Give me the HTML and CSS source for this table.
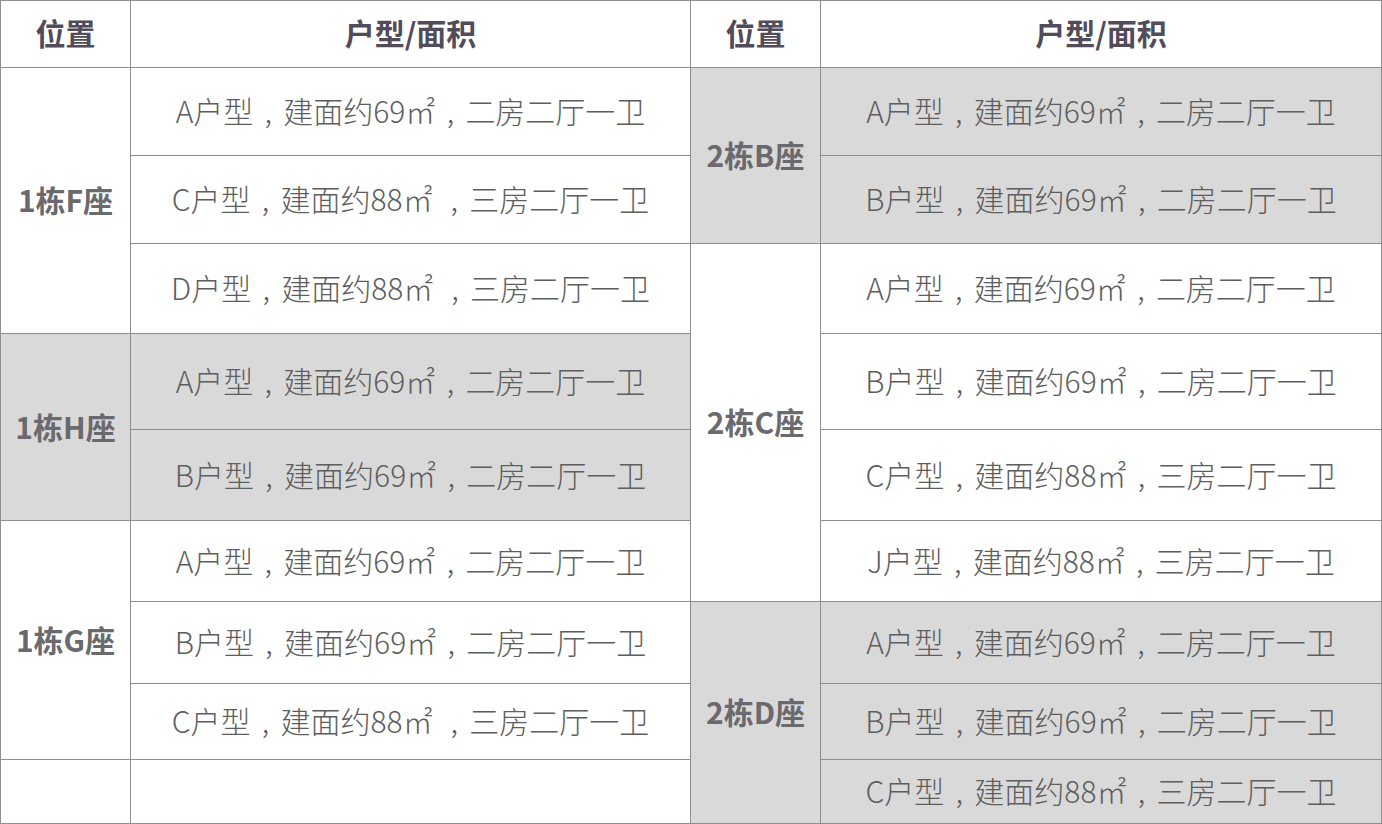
FILE: index.html
```html
<!DOCTYPE html>
<html lang="zh-CN">
<head>
<meta charset="utf-8">
<title>户型表</title>
<link rel="stylesheet" href="styles.css">
</head>
<body>
<div class="table">
  <div class="cell head c1 r1">位置</div>
  <div class="cell head c2 r1">户型/面积</div>
  <div class="cell head c3 r1">位置</div>
  <div class="cell head c4 r1">户型/面积</div>

  <div class="cell name c1 r2 span3">1栋F座</div>
  <div class="cell c2 r2">A户型<span class="cm">,</span>建面约69㎡<span class="cm">,</span>二房二厅一卫</div>
  <div class="cell c2 r3">C户型<span class="cm">,</span>建面约88㎡ <span class="cm">,</span>三房二厅一卫</div>
  <div class="cell c2 r4">D户型<span class="cm">,</span>建面约88㎡ <span class="cm">,</span>三房二厅一卫</div>

  <div class="cell name gray c1 r5 span2">1栋H座</div>
  <div class="cell gray c2 r5">A户型<span class="cm">,</span>建面约69㎡<span class="cm">,</span>二房二厅一卫</div>
  <div class="cell gray c2 r6">B户型<span class="cm">,</span>建面约69㎡<span class="cm">,</span>二房二厅一卫</div>

  <div class="cell name c1 r7 span3">1栋G座</div>
  <div class="cell c2 r7">A户型<span class="cm">,</span>建面约69㎡<span class="cm">,</span>二房二厅一卫</div>
  <div class="cell c2 r8">B户型<span class="cm">,</span>建面约69㎡<span class="cm">,</span>二房二厅一卫</div>
  <div class="cell c2 r9">C户型<span class="cm">,</span>建面约88㎡ <span class="cm">,</span>三房二厅一卫</div>

  <div class="cell c1 r10"></div>
  <div class="cell c2 r10"></div>

  <div class="cell name gray c3 r2 span2">2栋B座</div>
  <div class="cell gray c4 r2">A户型<span class="cm">,</span>建面约69㎡<span class="cm">,</span>二房二厅一卫</div>
  <div class="cell gray c4 r3">B户型<span class="cm">,</span>建面约69㎡<span class="cm">,</span>二房二厅一卫</div>

  <div class="cell name c3 r4 span4">2栋C座</div>
  <div class="cell c4 r4">A户型<span class="cm">,</span>建面约69㎡<span class="cm">,</span>二房二厅一卫</div>
  <div class="cell c4 r5">B户型<span class="cm">,</span>建面约69㎡<span class="cm">,</span>二房二厅一卫</div>
  <div class="cell c4 r6">C户型<span class="cm">,</span>建面约88㎡<span class="cm">,</span>三房二厅一卫</div>
  <div class="cell c4 r7">J户型<span class="cm">,</span>建面约88㎡<span class="cm">,</span>三房二厅一卫</div>

  <div class="cell name gray c3 r8 span3">2栋D座</div>
  <div class="cell gray c4 r8">A户型<span class="cm">,</span>建面约69㎡<span class="cm">,</span>二房二厅一卫</div>
  <div class="cell gray c4 r9">B户型<span class="cm">,</span>建面约69㎡<span class="cm">,</span>二房二厅一卫</div>
  <div class="cell gray c4 r10">C户型<span class="cm">,</span>建面约88㎡<span class="cm">,</span>三房二厅一卫</div>
</div>
</body>
</html>
```

FILE: styles.css
```css
html, body {
  margin: 0;
  padding: 0;
  background: #ffffff;
}

.table {
  width: 1382px;
  height: 824px;
  box-sizing: border-box;
  padding: 1px;
  background: #8e8e8e;
  display: grid;
  grid-template-columns: 129px 559px 129px 560px;
  grid-template-rows: 66px 87px 87px 89px 95px 90px 80px 81px 75px 63px;
  gap: 1px;
  font-family: "Noto Sans CJK SC", "Noto Sans", sans-serif;
}

.cell {
  background: #ffffff;
  display: flex;
  align-items: center;
  justify-content: center;
  white-space: pre;
  font-size: 30px;
  font-weight: 300;
  color: #5e5e5e;
  padding-bottom: 3px;
  box-sizing: border-box;
}

.cm {
  display: inline-block;
  width: 1em;
  text-align: center;
}

.gray {
  background: #d9d9d9;
}

.head {
  font-weight: 700;
  color: #514b5a;
  font-size: 30px;
  padding-bottom: 4px;
}

.name {
  font-weight: 700;
  color: #6a6a6e;
  font-size: 30px;
}

.c1 { grid-column: 1; }
.c2 { grid-column: 2; }
.c3 { grid-column: 3; }
.c4 { grid-column: 4; }

.r1 { grid-row-start: 1; }
.r2 { grid-row-start: 2; }
.r3 { grid-row-start: 3; }
.r4 { grid-row-start: 4; }
.r5 { grid-row-start: 5; }
.r6 { grid-row-start: 6; }
.r7 { grid-row-start: 7; }
.r8 { grid-row-start: 8; }
.r9 { grid-row-start: 9; }
.r10 { grid-row-start: 10; }

.span2 { grid-row-end: span 2; }
.span3 { grid-row-end: span 3; }
.span4 { grid-row-end: span 4; }
```
